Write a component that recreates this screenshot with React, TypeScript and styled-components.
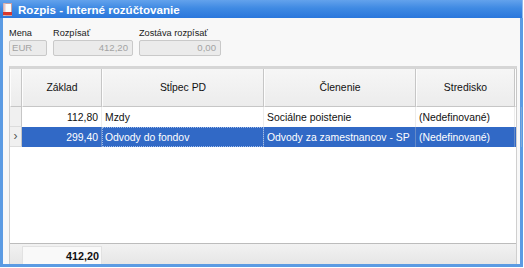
import React from "react";
import styled, { createGlobalStyle } from "styled-components";

const Global = createGlobalStyle`
  html, body { margin: 0; padding: 0; background: #ffffff; }
  body { font-family: "Liberation Sans", Arial, sans-serif; }
`;

const Window = styled.div`
  width: 523px;
  height: 267px;
  display: flex;
  flex-direction: column;
`;

const TitleBar = styled.div`
  height: 18px;
  flex: none;
  display: flex;
  align-items: center;
  gap: 6px;
  padding-left: 3px;
  background: linear-gradient(#63a2ec 0%, #3f8ae3 45%, #2a77dc 100%);
  border-right: 1px solid #8fb9ec;
  box-sizing: border-box;
`;

const TitleText = styled.span`
  color: #ffffff;
  font-weight: bold;
  font-size: 11.6px;
`;

const Frame = styled.div`
  flex: 1;
  min-height: 0;
  display: flex;
  flex-direction: column;
  background: #f8f8f8;
  border: 3px solid #5b9be3;
  border-top: none;
`;

const Fields = styled.div`
  display: flex;
  gap: 6px;
  padding: 9px 0 0 6px;
  height: 43px;
  box-sizing: border-box;
  flex: none;
`;

const Field = styled.div<{ $w: number }>`
  width: ${(p) => p.$w}px;
  display: flex;
  flex-direction: column;
  gap: 1px;
`;

const Label = styled.label`
  font-size: 9.2px;
  line-height: 12px;
  color: #1a1a1a;
  white-space: nowrap;
`;

const Input = styled.div<{ $right?: boolean }>`
  height: 16px;
  box-sizing: border-box;
  border: 1px solid #c9c9c9;
  border-radius: 2px;
  background: #ebebeb;
  color: #a3a3a3;
  font-size: 9.6px;
  line-height: 14px;
  padding: 0 4px 0 2px;
  text-align: ${(p) => (p.$right ? "right" : "left")};
`;

const Grid = styled.div`
  flex: 1;
  min-height: 0;
  margin: 5px 3px 0 6px;
  border-top: 3px solid #d6d6d6;
  border-left: 1px solid #cfcfcf;
  border-right: 1px solid #cfcfcf;
  background: #ffffff;
  display: flex;
  flex-direction: column;
  font-size: 10.4px;
  color: #111;
`;

const cols = "12px 80px 162px 152px 99px 1fr";

const HeaderRow = styled.div`
  display: grid;
  grid-template-columns: ${cols};
  height: 38px;
  flex: none;
  background: #f2f2f2;
`;

const HeadCell = styled.div`
  display: flex;
  align-items: center;
  justify-content: center;
  background: linear-gradient(#f6f6f6, #ececec);
  border-right: 1px solid #c6c6c6;
  border-bottom: 1px solid #c6c6c6;
  border-left: 1px solid #fdfdfd;
  box-sizing: border-box;
`;

const Row = styled.div<{ $sel?: boolean }>`
  display: grid;
  grid-template-columns: ${cols};
  height: 20px;
  flex: none;
  background: ${(p) => (p.$sel ? "#3169c6" : "#ffffff")};
  color: ${(p) => (p.$sel ? "#ffffff" : "#111111")};
`;

const Cell = styled.div<{ $right?: boolean; $focus?: boolean }>`
  display: flex;
  align-items: center;
  justify-content: ${(p) => (p.$right ? "flex-end" : "flex-start")};
  padding: 0 3px;
  border-right: 1px solid rgba(200, 200, 200, 0.35);
  box-sizing: border-box;
  white-space: nowrap;
  overflow: hidden;
  outline: ${(p) => (p.$focus ? "1px dotted #9dbbea" : "none")};
  outline-offset: -1px;
`;

const Indicator = styled.div`
  background: #f0f0f0;
  border-right: 1px solid #c6c6c6;
  border-bottom: 1px solid #dcdcdc;
  color: #555555;
  font-size: 12px;
  line-height: 1;
  display: flex;
  align-items: center;
  justify-content: center;
  box-sizing: border-box;
  padding-bottom: 2px;
`;

const Empty = styled.div`
  flex: 1;
  background: #ffffff;
`;

const Footer = styled.div`
  height: 21px;
  flex: none;
  display: grid;
  grid-template-columns: 12px 80px 1fr;
  border-top: 1px solid #bcbcbc;
  background: linear-gradient(#f2f2f2, #e6e6e6);
  padding-top: 2px;
  box-sizing: border-box;
`;

const SumCell = styled.div`
  grid-column: 2;
  background: #f9f9f9;
  border: 1px solid #e2e2e2;
  border-bottom: none;
  display: flex;
  align-items: center;
  justify-content: flex-end;
  padding-right: 2px;
  font-weight: bold;
  font-size: 10.8px;
  color: #111;
`;

const DocIcon = () => (
  <svg width="9" height="13" viewBox="0 0 9 13">
    <rect x="0.5" y="0.5" width="8" height="12" fill="#fbfbfb" stroke="#c9a0a0" />
    <rect x="0.5" y="0.5" width="2" height="12" fill="#e8c8c8" />
    <rect x="0" y="9" width="9" height="3" fill="#d8382f" />
  </svg>
);

const rows = [
  { z: "112,80", s: "Mzdy", c: "Sociálne poistenie", st: "(Nedefinované)", sel: false },
  { z: "299,40", s: "Odvody do fondov", c: "Odvody za zamestnancov - SP", st: "(Nedefinované)", sel: true },
];

export default function App() {
  return (
    <>
      <Global />
      <Window>
        <TitleBar>
          <DocIcon />
          <TitleText>Rozpis - Interné rozúčtovanie</TitleText>
        </TitleBar>
        <Frame>
          <Fields>
            <Field $w={38}>
              <Label>Mena</Label>
              <Input>EUR</Input>
            </Field>
            <Field $w={80}>
              <Label>Rozpísať</Label>
              <Input $right>412,20</Input>
            </Field>
            <Field $w={82}>
              <Label>Zostáva rozpísať</Label>
              <Input $right>0,00</Input>
            </Field>
          </Fields>
          <Grid>
            <HeaderRow>
              <HeadCell />
              <HeadCell>Základ</HeadCell>
              <HeadCell>Stĺpec PD</HeadCell>
              <HeadCell>Členenie</HeadCell>
              <HeadCell>Stredisko</HeadCell>
              <HeadCell />
            </HeaderRow>
            {rows.map((r) => (
              <Row key={r.z} $sel={r.sel}>
                <Indicator>{r.sel ? "›" : ""}</Indicator>
                <Cell $right>{r.z}</Cell>
                <Cell $focus={r.sel}>{r.s}</Cell>
                <Cell>{r.c}</Cell>
                <Cell>{r.st}</Cell>
                <Cell />
              </Row>
            ))}
            <Empty />
            <Footer>
              <SumCell>412,20</SumCell>
            </Footer>
          </Grid>
        </Frame>
      </Window>
    </>
  );
}
